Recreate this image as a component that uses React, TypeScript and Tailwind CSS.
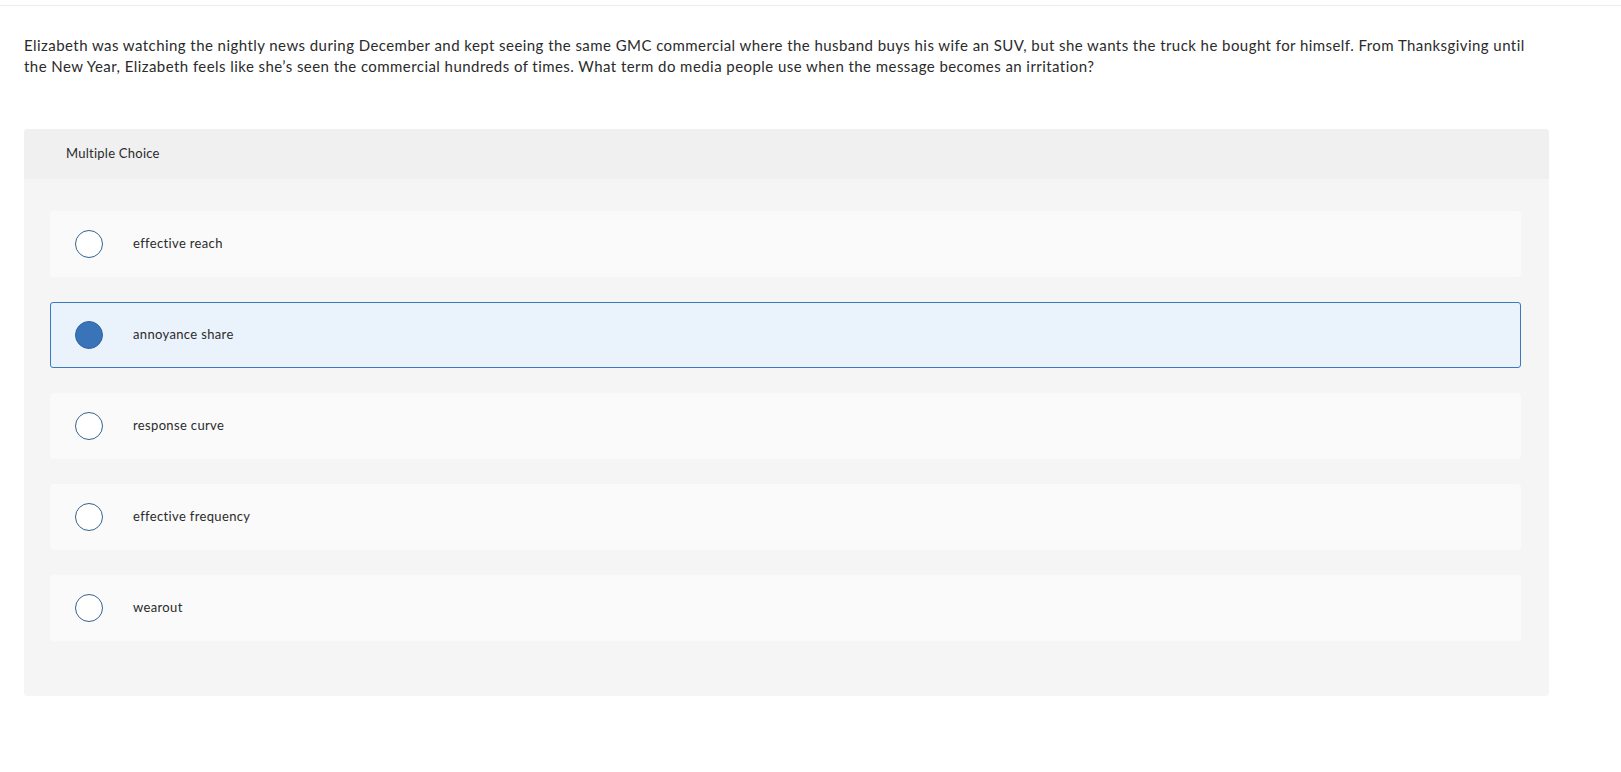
import { useState } from "react"

const CHOICES = [
  "effective reach",
  "annoyance share",
  "response curve",
  "effective frequency",
  "wearout",
]

const QUESTION =
  "Elizabeth was watching the nightly news during December and kept seeing the same GMC commercial where the husband buys his wife an SUV, but she wants the truck he bought for himself. From Thanksgiving until the New Year, Elizabeth feels like she\u2019s seen the commercial hundreds of times. What term do media people use when the message becomes an irritation?"

export default function App() {
  const [selected, setSelected] = useState(1)

  return (
    <div className="min-h-screen bg-white font-['Lato',_'Liberation_Sans',_sans-serif] text-[#2b2b2b]">
      <div className="h-[5px]" />
      <div className="border-t border-[#ececec]" />

      <p className="ml-[24px] mt-[29px] w-[1522px] text-[15px] leading-[21px] tracking-[0.44px]">{QUESTION}</p>

      <div className="ml-[24px] mt-[52px] w-[1525px] overflow-hidden rounded-[4px] bg-[#f5f5f5]">
        <div className="flex h-[50px] items-center bg-[#f0f0f0] pl-[42px] text-[13px] tracking-[0.25px]">
          Multiple Choice
        </div>

        <ul className="flex flex-col gap-[25px] pb-[55px] pl-[26px] pr-[28px] pt-[32px]">
          {CHOICES.map((choice, i) => {
            const isOn = i === selected
            return (
              <li key={choice}>
                <button
                  onClick={() => setSelected(i)}
                  className={
                    isOn
                      ? "flex h-[66px] w-full items-center rounded-[3px] border border-[#3b78c2] bg-[#eaf2fb] pl-[24px] text-left"
                      : "flex h-[66px] w-full items-center rounded-[3px] border border-[#fafafa] bg-[#fafafa] pl-[24px] text-left"
                  }
                >
                  <span
                    className={
                      isOn
                        ? "h-[28px] w-[28px] shrink-0 rounded-full border border-[#2f65a3] bg-[#3a74b8]"
                        : "h-[28px] w-[28px] shrink-0 rounded-full border-[1.5px] border-[#33638f] bg-white"
                    }
                  />
                  <span className="ml-[30px] text-[13px] tracking-[0.35px]">{choice}</span>
                </button>
              </li>
            )
          })}
        </ul>
      </div>
    </div>
  )
}
